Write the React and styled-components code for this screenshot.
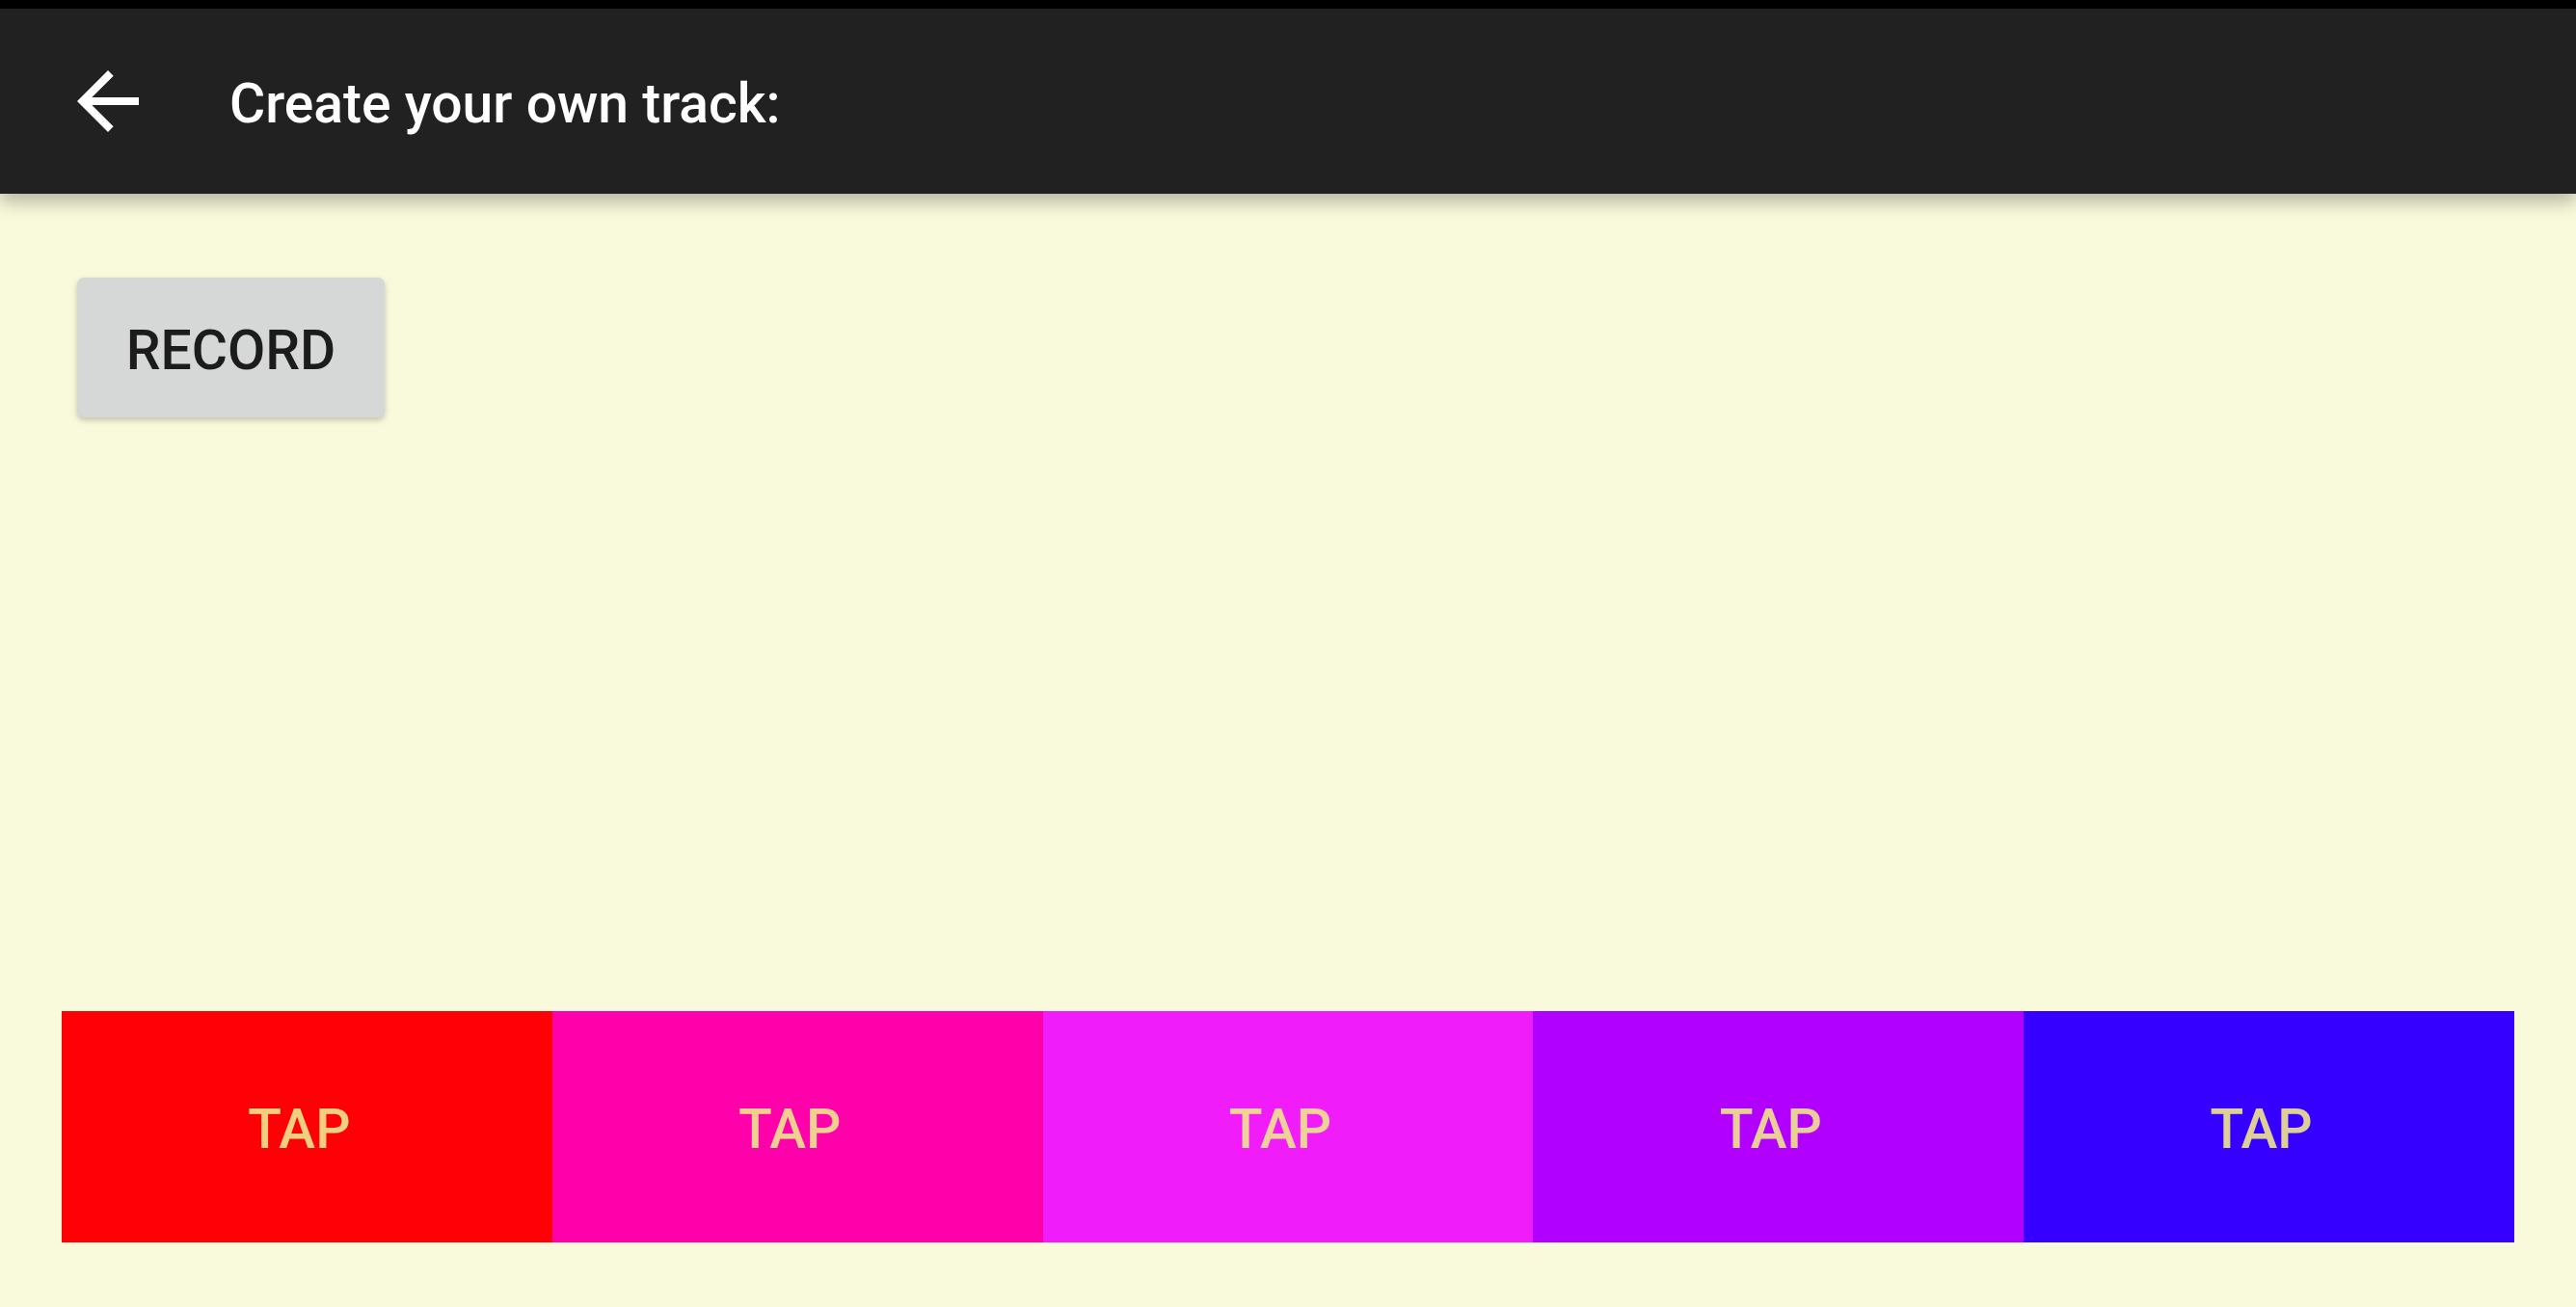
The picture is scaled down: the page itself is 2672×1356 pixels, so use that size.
import React from "react";
import styled, { createGlobalStyle } from "styled-components";

const GlobalStyle = createGlobalStyle`
  html, body {
    margin: 0;
    padding: 0;
  }
  body {
    font-family: Roboto, "Noto Sans", sans-serif;
    background: #f9f9dc;
  }
`;

const pads = ["#ff0006", "#ff00aa", "#f01cf9", "#b100ff", "#3500ff"];

const App = () => {
  return (
    <Page>
      <GlobalStyle />
      <StatusBar />
      <AppBar>
        <BackButton aria-label="back">
          <svg width="96" height="96" viewBox="0 0 24 24">
            <path
              fill="#ffffff"
              d="M20 11H7.83l5.59-5.59L12 4l-8 8 8 8 1.41-1.41L7.83 13H20v-2z"
            />
          </svg>
        </BackButton>
        <Title>Create your own track:</Title>
      </AppBar>

      <Content>
        <RecordButton>RECORD</RecordButton>
        <TapRow>
          {pads.map((c, i) => (
            <TapPad key={i} color={c}>
              TAP
            </TapPad>
          ))}
        </TapRow>
      </Content>
    </Page>
  );
};

const Page = styled.div`
  min-height: 100vh;
  display: flex;
  flex-direction: column;
  background: #f9f9dc;
`;

const StatusBar = styled.div`
  height: 9px;
  background: #000;
`;

const AppBar = styled.header`
  height: 192px;
  background: #212121;
  display: flex;
  align-items: center;
  padding-left: 64px;
  box-shadow: 0 8px 18px rgba(0, 0, 0, 0.28);
  position: relative;
  z-index: 1;
`;

const BackButton = styled.div`
  width: 96px;
  height: 96px;
  display: flex;
  align-items: center;
  justify-content: center;
  svg {
    display: block;
  }
`;

const Title = styled.h1`
  margin: 0 0 0 78px;
  padding-top: 4px;
  color: #fff;
  font-family: Roboto, sans-serif;
  font-weight: 500;
  font-size: 57px;
  letter-spacing: 0;
`;

const Content = styled.main`
  flex: 1;
  display: flex;
  flex-direction: column;
  padding: 87px 64px 67px;
`;

const RecordButton = styled.button`
  align-self: flex-start;
  margin-left: 16px;
  width: 319px;
  height: 145px;
  padding: 6px 0 0;
  border: none;
  border-radius: 7px;
  background: #d6d7d7;
  color: #1c1c1c;
  font-family: Roboto, sans-serif;
  font-weight: 500;
  font-size: 57px;
  letter-spacing: 0;
  box-shadow: 0 3px 6px rgba(0, 0, 0, 0.22);
  cursor: pointer;
`;

const TapRow = styled.div`
  margin-top: auto;
  display: grid;
  grid-template-columns: repeat(5, 1fr);
  height: 240px;
`;

const TapPad = styled.div`
  background: ${(p) => p.color};
  display: flex;
  align-items: center;
  justify-content: center;
  padding: 5px 16px 0 0;
  color: rgba(240, 230, 140, 0.9);
  font-family: Roboto, sans-serif;
  font-weight: 500;
  font-size: 57px;
`;

export default App;
